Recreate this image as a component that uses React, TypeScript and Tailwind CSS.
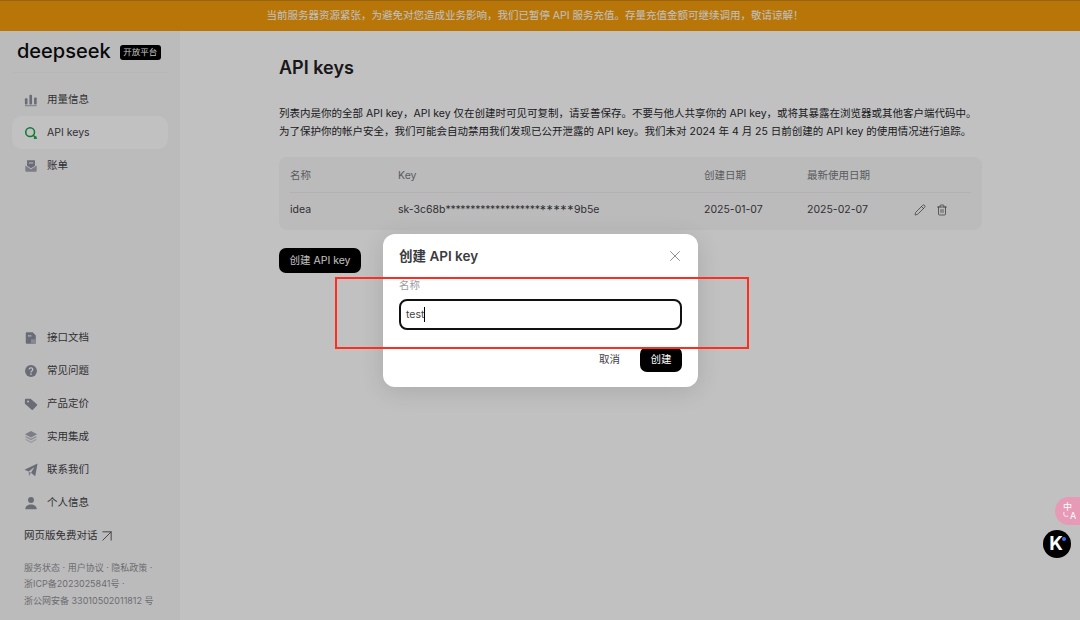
import { Pencil, Trash2, X, ArrowUpRight } from 'lucide-react';
import type { ReactNode } from 'react';

const font = 'font-["Inter","Noto_Sans_CJK_SC",sans-serif]';

const Icon = ({ children }: { children: ReactNode }) => (
  <svg viewBox="0 0 16 16" className="h-[14px] w-[14px] shrink-0" fill="#8b8e9c">
    {children}
  </svg>
);

const topItems: { name: string; icon: ReactNode; active?: boolean }[] = [
  {
    name: '用量信息',
    icon: (
      <Icon>
        <rect x="1" y="6" width="3" height="7" rx="1" />
        <rect x="6.2" y="2" width="3" height="11" rx="1" />
        <rect x="11.5" y="5" width="3" height="8" rx="1" />
        <rect x="1" y="13.6" width="13.5" height="1.6" fill="#b4b6c0" />
      </Icon>
    ),
  },
  {
    name: 'API keys',
    active: true,
    icon: (
      <svg viewBox="0 0 16 16" className="h-[14px] w-[14px] shrink-0" fill="none" stroke="#16a34a" strokeWidth="1.8">
        <circle cx="7" cy="7" r="5" />
        <path d="M10.5 10.5 14 14M12 14l1.5-1.5" strokeLinecap="round" />
      </svg>
    ),
  },
  {
    name: '账单',
    icon: (
      <Icon>
        <path d="M3.5 1.5h9v6.2L8 10.5 3.5 7.7z" />
        <path d="M1.5 7.5 8 11.8l6.5-4.3v6a1 1 0 0 1-1 1h-11a1 1 0 0 1-1-1z" fill="#a4a6b2" />
        <path d="M5.5 4h5v1.1h-5z" fill="#fff" />
      </Icon>
    ),
  },
];

const bottomItems: { name: string; icon: ReactNode }[] = [
  {
    name: '接口文档',
    icon: (
      <Icon>
        <path d="M3 1.5h7l3.5 3.5v8.5a1 1 0 0 1-1 1H3a1 1 0 0 1-1-1v-11a1 1 0 0 1 1-1z" />
        <path d="M4.5 5h4v1.2h-4z" fill="#fff" />
        <path d="M8 9.5h5.5v5H8z" fill="#b4b6c0" />
      </Icon>
    ),
  },
  {
    name: '常见问题',
    icon: (
      <Icon>
        <circle cx="8" cy="8" r="6.8" />
        <path d="M6 6.3a2 2 0 1 1 3 1.8c-.7.4-1 .8-1 1.5" fill="none" stroke="#fff" strokeWidth="1.4" />
        <circle cx="8" cy="11.6" r=".9" fill="#fff" />
      </Icon>
    ),
  },
  {
    name: '产品定价',
    icon: (
      <Icon>
        <path d="M1 3a1 1 0 0 1 1-1h5.5l7.3 6.3a1 1 0 0 1 0 1.5l-4.6 4.8a1 1 0 0 1-1.4 0L1 7.8z" />
        <circle cx="4.6" cy="5.2" r="1.1" fill="#fff" />
      </Icon>
    ),
  },
  {
    name: '实用集成',
    icon: (
      <Icon>
        <path d="M8 1 15 4.8 8 8.6 1 4.8z" fill="#a4a6b2" />
        <path d="M2.8 7 8 9.8 13.2 7 15 8 8 11.8 1 8z" fill="#bcbec8" />
        <path d="M2.8 10.2 8 13 13.2 10.2 15 11.2 8 15 1 11.2z" fill="#d0d1d8" />
      </Icon>
    ),
  },
  {
    name: '联系我们',
    icon: (
      <Icon>
        <path d="M15.5 .5 12.8 15 8 11 12 4.5 5.4 9.8.5 7.6z" />
        <path d="M5.4 9.8 8 11 5.6 15z" fill="#a4a6b2" />
      </Icon>
    ),
  },
  {
    name: '个人信息',
    icon: (
      <Icon>
        <circle cx="8" cy="4.6" r="3.4" />
        <path d="M1.5 15c0-3.4 2.9-5.3 6.5-5.3s6.5 1.9 6.5 5.3z" />
      </Icon>
    ),
  },
];

const NavItem = ({ name, icon, active }: { name: string; icon: ReactNode; active?: boolean }) => (
  <div
    className={`mx-3 flex h-[33px] items-center gap-[9px] rounded-[10px] pl-3 text-[10.5px] text-[#3f4046] ${
      active ? 'bg-white' : ''
    }`}
  >
    {icon}
    <span>{name}</span>
  </div>
);

export default function App() {
  return (
    <div className={`relative flex h-[620px] w-[1080px] flex-col overflow-hidden bg-white ${font}`}>
      <div className="flex h-[31px] shrink-0 items-center justify-center border-t border-[#c9851a] bg-[#f49c0c] pr-[10px] text-[10.5px] text-white">
        当前服务器资源紧张，为避免对您造成业务影响，我们已暂停 API 服务充值。存量充值金额可继续调用，敬请谅解！
      </div>

      <div className="flex min-h-0 flex-1">
        <aside className="flex w-[180px] shrink-0 flex-col bg-[#f8f8f8]">
          <div className="mx-3 flex h-[42px] items-center gap-[9px] border-b border-[#f2f2f2] pb-[2px] pl-[5px]">
            <span className="text-[20px] leading-none font-medium text-[#0c0c10]">deepseek</span>
            <span className="mt-[3px] rounded-[3px] bg-black px-[3.5px] py-[1px] text-[8.5px] leading-[13px] whitespace-nowrap text-white">
              开放平台
            </span>
          </div>
          <nav className="mt-[10px]">
            {topItems.map((item) => (
              <NavItem key={item.name} {...item} />
            ))}
          </nav>
          <nav className="mt-auto">
            {bottomItems.map((item) => (
              <NavItem key={item.name} {...item} />
            ))}
            <div className="flex h-[33px] items-center pl-6 text-[10.5px] text-[#3f4046]">
              网页版免费对话
              <ArrowUpRight size={20} strokeWidth={1} className="-ml-[1px]" />
            </div>
          </nav>
          <div className="mt-[7px] mb-[11px] pl-6 text-[9px] leading-[16.5px] text-[#8f9096]">
            <div>服务状态 · 用户协议 · 隐私政策 ·</div>
            <div>浙ICP备2023025841号 ·</div>
            <div>浙公网安备 33010502011812 号</div>
          </div>
        </aside>

        <main className="flex-1 pt-[25px] pl-[99px] pr-[98px]">
          <h1 className="text-[18px] leading-[24px] font-semibold text-[#1f2024]">API keys</h1>
          <p className="mt-[25px] whitespace-nowrap text-[10.5px] leading-[18px] text-[#26272b]">
            列表内是你的全部 API key，API key 仅在创建时可见可复制，请妥善保存。不要与他人共享你的 API key，或将其暴露在浏览器或其他客户端代码中。
            <br />
            为了保护你的帐户安全，我们可能会自动禁用我们发现已公开泄露的 API key。我们未对 2024 年 4 月 25 日前创建的 API key 的使用情况进行追踪。
          </p>
          <div className="mt-[16px] rounded-[8px] bg-[#f8f8f8] px-[11px] text-[10.5px]">
            <div className="flex h-[36px] items-center border-b border-[#ebebeb] pt-[2px] text-[#77787e]">
              <span className="w-[108px]">名称</span>
              <span className="w-[306px]">Key</span>
              <span className="w-[103px]">创建日期</span>
              <span>最新使用日期</span>
            </div>
            <div className="flex h-[37px] items-center pb-[3px] text-[#3f4046]">
              <span className="w-[108px]">idea</span>
              <span className="w-[306px]">
                sk-3c68b<span className="tracking-[-0.3px]">*******************</span>
                <span className="align-[-2px] text-[12.5px] leading-none tracking-[0.6px]">*****</span>9b5e
              </span>
              <span className="w-[103px]">2025-01-07</span>
              <span className="w-[107px]">2025-02-07</span>
              <Pencil size={12} strokeWidth={1.4} />
              <Trash2 size={12} strokeWidth={1.4} className="ml-[10px]" />
            </div>
          </div>
          <button className="mt-[18px] h-[25px] w-[82px] rounded-[7px] bg-black text-[10.5px] text-white">
            创建 API key
          </button>
        </main>
      </div>

      <div className="absolute inset-0 bg-black/[0.243]" />

      <div className="absolute top-[234px] left-[383px] w-[315px] rounded-[12px] bg-white px-4 pt-[13px] pb-[15px] shadow-[0_4px_24px_rgba(0,0,0,0.12)]">
        <div className="flex h-[18px] items-center justify-between">
          <span className="text-[13.5px] font-semibold text-[#3a3b40]">创建 API key</span>
          <X size={18} strokeWidth={1.1} className="-mr-[2px] text-[#77787e]" />
        </div>
        <div className="mt-[14px] text-[10.5px] leading-[13px] text-[#9a9ba1]">名称</div>
        <div className="mt-[7px] flex h-[31px] items-center rounded-[8px] border-2 border-[#111] pl-[5px] text-[10.5px] text-[#3f4046]">
          test
          <span className="h-[15px] w-px bg-black" />
        </div>
        <div className="mt-[17px] flex items-center justify-end gap-5 text-[10.5px]">
          <span className="text-[#3f4046]">取消</span>
          <button className="h-[25px] w-[42px] rounded-[7px] bg-black text-white">创建</button>
        </div>
      </div>

      <div className="absolute top-[277px] left-[335px] h-[72px] w-[414px] border-2 border-[#ff2d20]" />

      <div className="absolute top-[497px] right-0 h-[28px] w-[25px] rounded-l-[14px] bg-[#e79ab5] pt-[5px] pl-[8px] text-[9px] leading-[9px] text-white">
        <div>中</div>
        <div className="pl-[7px]">A</div>
        <svg viewBox="0 0 8 8" className="absolute top-[14px] left-[8px] h-[7px] w-[7px]" fill="none" stroke="#fff" strokeWidth="0.9">
          <path d="M1 1v3a2 2 0 0 0 2 2h3" />
        </svg>
      </div>
      <div className="absolute top-[530px] left-[1043px] flex h-[28px] w-[28px] items-center justify-center rounded-full bg-black pr-[2px] text-[19px] font-bold text-white">
        K
        <span className="absolute top-[7px] left-[19px] h-[3.5px] w-[3.5px] rounded-full bg-[#3b6cff]" />
      </div>
    </div>
  );
}
